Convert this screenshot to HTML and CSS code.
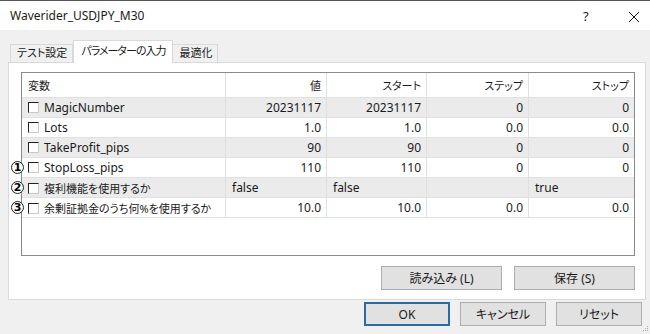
FILE: index.html
```html
<!DOCTYPE html>
<html lang="ja">
<head>
  <meta charset="UTF-8">
  <title>Waverider_USDJPY_M30</title>
  <link rel="stylesheet" href="styles.css">
</head>
<body>
  <div class="window">
    <div class="titlebar">
      <span class="title">Waverider_USDJPY_M30</span>
      <span class="help">?</span>
      <span class="close">
        <svg width="12" height="12" viewBox="0 0 12 12"><path d="M1 1 L11 11 M11 1 L1 11" stroke="#111" stroke-width="1" fill="none"/></svg>
      </span>
    </div>

    <div class="tabs">
      <div class="tab">テスト設定</div>
      <div class="tab active">パラメーターの入力</div>
      <div class="tab">最適化</div>
    </div>

    <div class="panel">
      <div class="grid">
        <table>
          <colgroup>
            <col style="width:204px">
            <col style="width:101px">
            <col style="width:100px">
            <col style="width:102px">
            <col>
          </colgroup>
          <thead>
            <tr>
              <th class="name ja">変数</th>
              <th class="ja">値</th>
              <th class="ja">スタート</th>
              <th class="ja">ステップ</th>
              <th class="ja">ストップ</th>
            </tr>
          </thead>
          <tbody>
            <tr class="odd">
              <td class="name"><span class="check"></span>MagicNumber</td>
              <td>20231117</td><td>20231117</td><td>0</td><td>0</td>
            </tr>
            <tr>
              <td class="name"><span class="check"></span>Lots</td>
              <td>1.0</td><td>1.0</td><td>0.0</td><td>0.0</td>
            </tr>
            <tr class="odd">
              <td class="name"><span class="check"></span>TakeProfit_pips</td>
              <td>90</td><td>90</td><td>0</td><td>0</td>
            </tr>
            <tr>
              <td class="name"><span class="mark">1</span><span class="check"></span>StopLoss_pips</td>
              <td>110</td><td>110</td><td>0</td><td>0</td>
            </tr>
            <tr class="odd">
              <td class="name ja"><span class="mark">2</span><span class="check"></span>複利機能を使用するか</td>
              <td class="text">false</td><td class="text">false</td><td></td><td class="text">true</td>
            </tr>
            <tr>
              <td class="name ja"><span class="mark">3</span><span class="check"></span>余剰証拠金のうち何%を使用するか</td>
              <td>10.0</td><td>10.0</td><td>0.0</td><td>0.0</td>
            </tr>
          </tbody>
        </table>
      </div>
      <div class="panel-buttons">
        <button class="btn wide">読み込み (L)</button>
        <button class="btn wide">保存 (S)</button>
      </div>
    </div>

    <div class="footer">
      <button class="btn small default">OK</button>
      <button class="btn small">キャンセル</button>
      <button class="btn small">リセット</button>
      <svg class="grip" width="6" height="6" viewBox="0 0 6 6">
        <rect x="4" y="0" width="1" height="1" fill="#aaa"/>
        <rect x="2" y="2" width="1" height="1" fill="#aaa"/>
        <rect x="4" y="2" width="1" height="1" fill="#aaa"/>
        <rect x="0" y="4" width="1" height="1" fill="#aaa"/>
        <rect x="2" y="4" width="1" height="1" fill="#aaa"/>
        <rect x="4" y="4" width="1" height="1" fill="#aaa"/>
      </svg>
    </div>
  </div>
</body>
</html>
```

FILE: styles.css
```css
* {
  margin: 0;
  padding: 0;
  box-sizing: border-box;
}
body {
  font-family: 'Noto Sans', 'Noto Sans CJK JP', sans-serif;
  font-size: 12px;
  font-feature-settings: "palt";
  color: #1a1a1a;
  background-color: #f0f0f0;
}
.window {
  width: 650px;
  height: 334px;
  background-color: #f0f0f0;
  position: relative;
  overflow: hidden;
}
.titlebar {
  height: 30px;
  background-color: #fff;
  border-top: 1px solid #555;
  display: flex;
  align-items: center;
  padding-left: 10px;
}
.title {
  flex: 1;
  font-size: 12px;
}
.help {
  width: 20px;
  font-size: 13px;
  margin-right: 25px;
}
.close {
  width: 18px;
  height: 12px;
  margin-right: 4px;
}
.ja {
  font-size: 11px;
}
.tabs {
  display: flex;
  align-items: flex-end;
  height: 32px;
  padding-left: 10px;
  position: relative;
  z-index: 1;
  font-size: 11px;
}
.tab {
  height: 18px;
  line-height: 16px;
  padding: 0 5px 0 6px;
  border: 1px solid #d9d9d9;
  border-bottom: none;
  background-color: #f0f0f0;
}
.tab + .tab {
  border-left: none;
}
.tab.active {
  height: 23px;
  line-height: 19px;
  background-color: #fff;
  padding: 0 7px;
  margin-bottom: -1px;
  letter-spacing: -1px;
  border-left: 1px solid #d9d9d9;
}
.panel {
  margin-left: 8px;
  width: 638px;
  height: 238px;
  background-color: #fff;
  border: 1px solid #d9d9d9;
  padding: 9px 10px 0 12px;
}
.grid {
  height: 184px;
  border: 1px solid #8a8a8a;
  background-color: #fff;
}
table {
  width: 100%;
  table-layout: fixed;
  border-collapse: separate;
  border-spacing: 0;
}
th, td {
  text-align: right;
  font-weight: normal;
  white-space: nowrap;
  padding: 0 5px 0 6px;
  border-right: 1px solid #e0e0e0;
  border-bottom: 1px solid #e0e0e0;
}
th:last-child, td:last-child {
  border-right: none;
}
th {
  height: 25px;
  background-color: #fff;
}
td {
  height: 20px;
}
th.name, td.name, td.text {
  text-align: left;
}
td.name {
  position: relative;
  overflow: visible;
}
tr.odd td {
  background-color: #ebebeb;
}
.check {
  display: inline-block;
  width: 11px;
  height: 11px;
  border: 1px solid #c9c9c9;
  border-top-color: #222;
  border-left-color: #222;
  background-color: #fff;
  margin-right: 5px;
  vertical-align: -1px;
}
.mark {
  position: absolute;
  left: -11px;
  top: 3px;
  width: 13px;
  height: 13px;
  border: 1px solid #222;
  border-radius: 50%;
  background-color: #fff;
  font-family: 'DejaVu Sans', sans-serif;
  font-weight: bold;
  font-size: 11px;
  line-height: 11px;
  text-align: center;
  color: #000;
}
.panel-buttons {
  display: flex;
  justify-content: flex-end;
  gap: 12px;
  margin-top: 10px;
}
.btn {
  font-family: 'Noto Sans', 'Noto Sans CJK JP', sans-serif;
  font-feature-settings: "palt";
  font-size: 12px;
  background-color: #e1e1e1;
  border: 1px solid #adadad;
  color: #1a1a1a;
  height: 24px;
}
.btn.wide {
  width: 121px;
}
.footer {
  display: flex;
  justify-content: flex-end;
  gap: 10px;
  padding-right: 8px;
  margin-top: 2px;
}
.btn.small {
  width: 86px;
}
.btn.default {
  border: 2px solid #2a6ba3;
}
.grip {
  position: absolute;
  right: 1px;
  bottom: 2px;
}
```
